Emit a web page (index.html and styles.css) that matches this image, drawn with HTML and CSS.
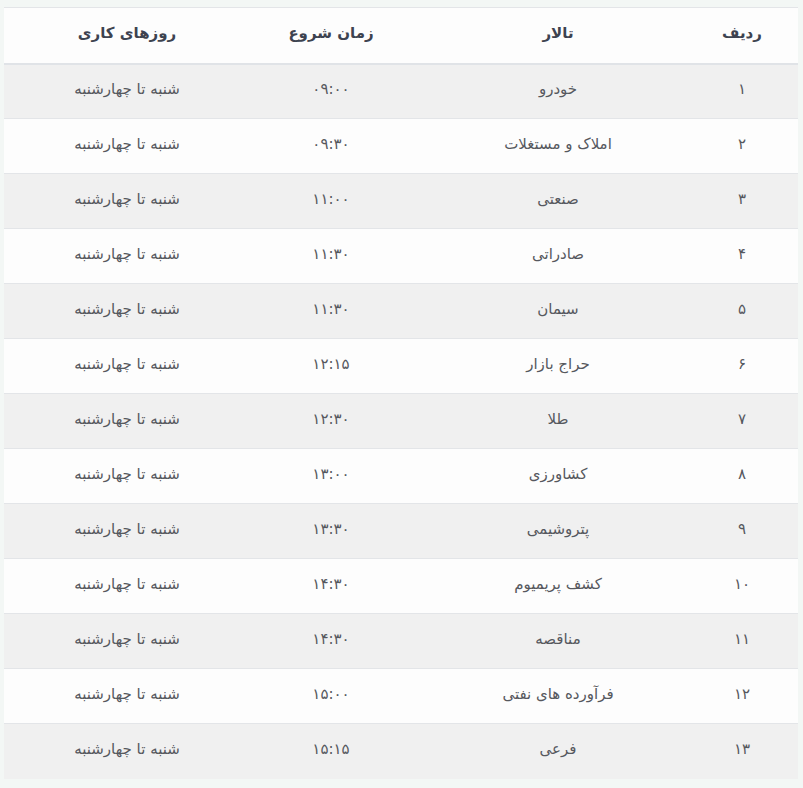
FILE: index.html
```html
<!DOCTYPE html>
<html lang="fa" dir="rtl">
<head>
<meta charset="utf-8">
<title>ساعات کار تالارها</title>
<link rel="stylesheet" href="styles.css">
</head>
<body>
<table class="halls">
  <colgroup>
    <col class="c-idx"><col class="c-hall"><col class="c-time"><col class="c-days">
  </colgroup>
  <thead>
    <tr><th>ردیف</th><th>تالار</th><th>زمان شروع</th><th class="days">روزهای کاری</th></tr>
  </thead>
  <tbody>
    <tr><td>۱</td><td>خودرو</td><td>۰۹:۰۰</td><td class="days">شنبه تا چهارشنبه</td></tr>
    <tr><td>۲</td><td>املاک و مستغلات</td><td>۰۹:۳۰</td><td class="days">شنبه تا چهارشنبه</td></tr>
    <tr><td>۳</td><td>صنعتی</td><td>۱۱:۰۰</td><td class="days">شنبه تا چهارشنبه</td></tr>
    <tr><td>۴</td><td>صادراتی</td><td>۱۱:۳۰</td><td class="days">شنبه تا چهارشنبه</td></tr>
    <tr><td>۵</td><td>سیمان</td><td>۱۱:۳۰</td><td class="days">شنبه تا چهارشنبه</td></tr>
    <tr><td>۶</td><td>حراج بازار</td><td>۱۲:۱۵</td><td class="days">شنبه تا چهارشنبه</td></tr>
    <tr><td>۷</td><td>طلا</td><td>۱۲:۳۰</td><td class="days">شنبه تا چهارشنبه</td></tr>
    <tr><td>۸</td><td>کشاورزی</td><td>۱۳:۰۰</td><td class="days">شنبه تا چهارشنبه</td></tr>
    <tr><td>۹</td><td>پتروشیمی</td><td>۱۳:۳۰</td><td class="days">شنبه تا چهارشنبه</td></tr>
    <tr><td>۱۰</td><td>کشف پریمیوم</td><td>۱۴:۳۰</td><td class="days">شنبه تا چهارشنبه</td></tr>
    <tr><td>۱۱</td><td>مناقصه</td><td>۱۴:۳۰</td><td class="days">شنبه تا چهارشنبه</td></tr>
    <tr><td>۱۲</td><td>فرآورده های نفتی</td><td>۱۵:۰۰</td><td class="days">شنبه تا چهارشنبه</td></tr>
    <tr><td>۱۳</td><td>فرعی</td><td>۱۵:۱۵</td><td class="days">شنبه تا چهارشنبه</td></tr>
  </tbody>
</table>
</body>
</html>
```
FILE: styles.css
```css
html, body {
  margin: 0;
  background: #f3f7f5;
}
body {
  padding: 7px 5px 10px 4px;
  font-family: "DejaVu Sans", "Noto Sans", sans-serif;
  color: #56585e;
}
.halls {
  width: 794px;
  border-collapse: collapse;
  table-layout: fixed;
  background: #fdfdfd;
}
.c-idx { width: 112px; }
.c-hall { width: 256px; }
.c-time { width: 198px; }
.c-days { width: 228px; }
.halls th,
.halls td {
  padding: 0 12px 4px;
  text-align: center;
  vertical-align: middle;
  border-top: 1px solid #e3e5e8;
  box-sizing: border-box;
  font-size: 15px;
}
.halls th {
  font-weight: bold;
  color: #3d4350;
  border-bottom: 2px solid #e0e3e7;
  height: 56px;
}
.halls td {
  height: 55px;
}
.halls .days {
  padding-left: 30px;
}
.halls tbody tr:nth-child(odd) {
  background: #f0f0f0;
}
```
